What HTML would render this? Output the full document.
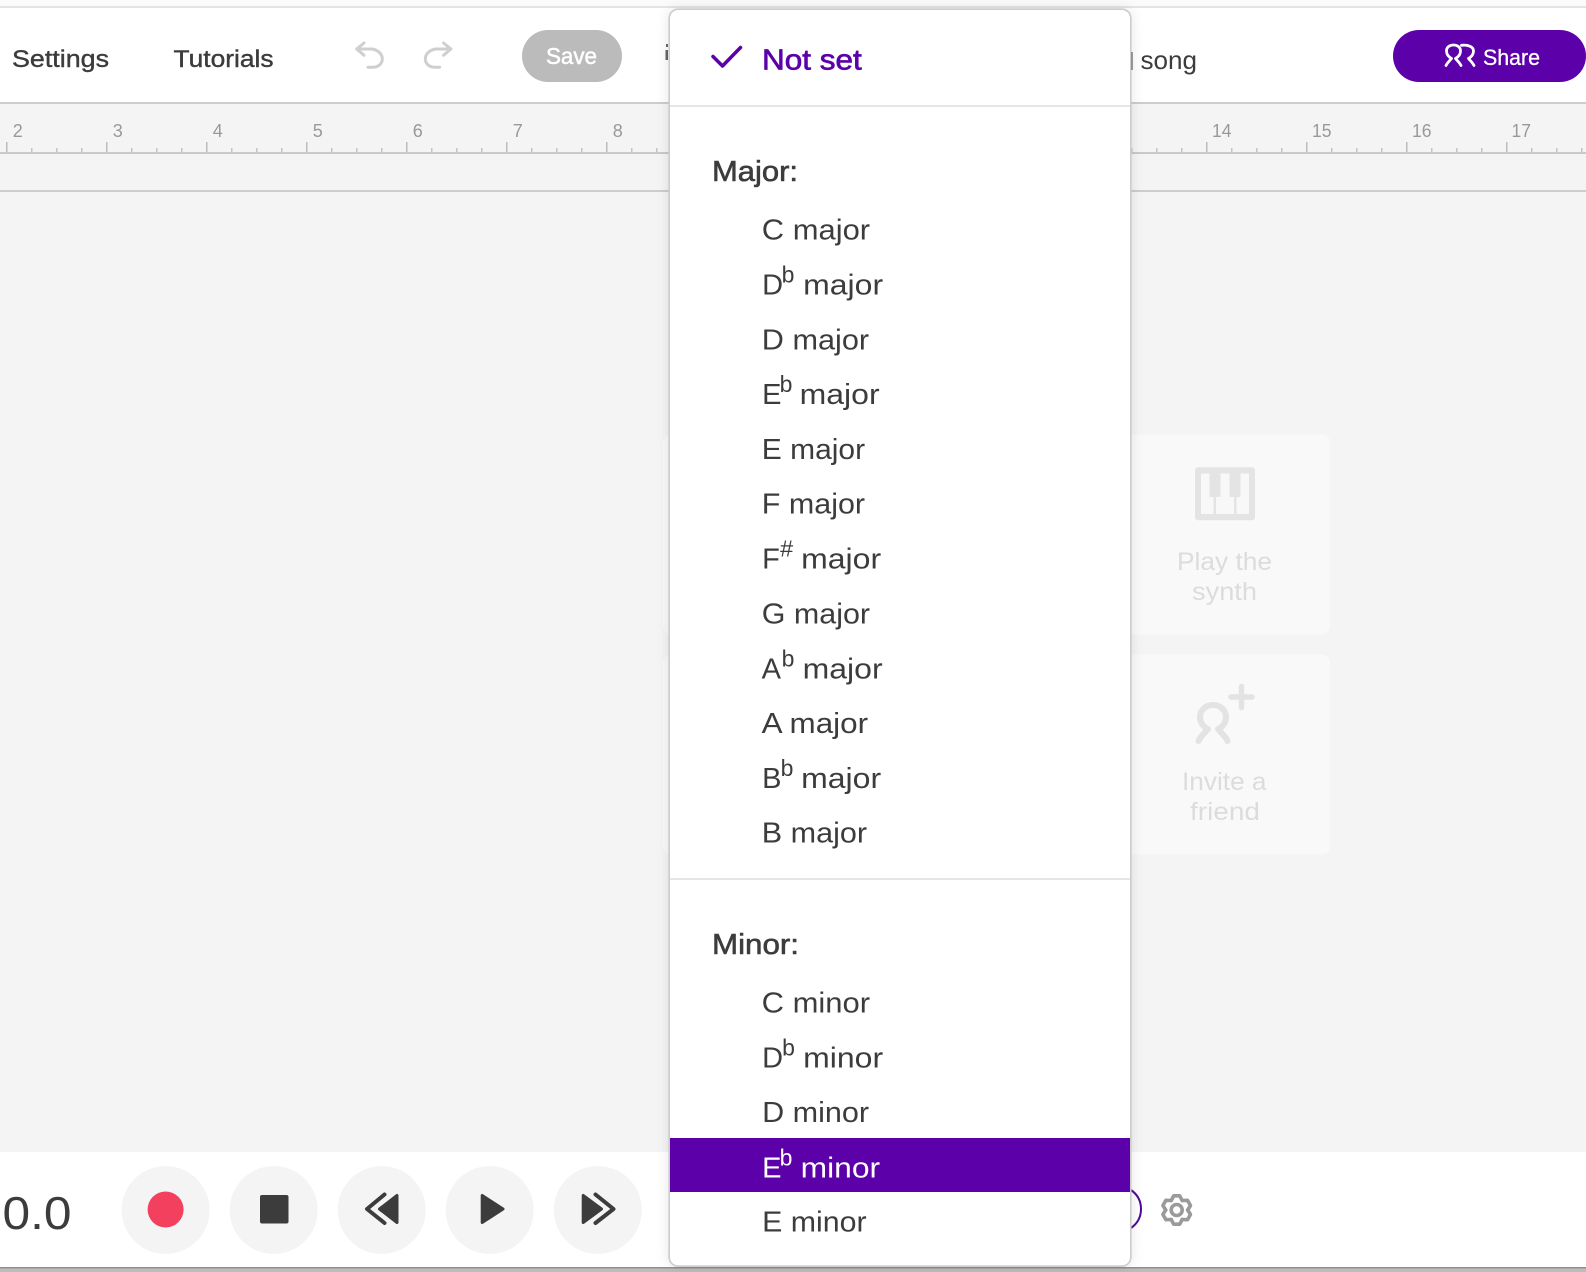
<!DOCTYPE html>
<html lang="en">
<head>
<meta charset="utf-8">
<title>Key selector</title>
<style>
html,body{margin:0;padding:0;width:1586px;height:1272px;overflow:hidden;background:#f4f4f4}
svg{display:block;position:absolute;left:0;top:0}
text{font-family:"Liberation Sans",sans-serif;fill:#3c3c3c}
.r{font-size:29px}
.s{font-size:23px}
.m{stroke:#3c3c3c;stroke-width:.6px}
.n{font-size:18px;fill:#999}
.c{font-size:25px;fill:#dcdcdc}
</style>
</head>
<body>
<svg width="1586" height="1272" viewBox="0 0 1586 1272" xmlns="http://www.w3.org/2000/svg">
<defs>
<pattern id="ticks" x="6" y="140" width="100" height="14" patternUnits="userSpaceOnUse">
<rect x="0" y="2" width="1.5" height="12" fill="#bdbdbd"/>
<rect x="25" y="8" width="1.5" height="6" fill="#c4c4c4"/>
<rect x="50" y="8" width="1.5" height="6" fill="#c4c4c4"/>
<rect x="75" y="8" width="1.5" height="6" fill="#c4c4c4"/>
</pattern>
</defs>

<!-- top strip and header -->
<rect x="0" y="0" width="1586" height="6" fill="#fbfbfb"/>
<rect x="0" y="6" width="1586" height="2" fill="#e4e4e4"/>
<rect x="0" y="8" width="1586" height="95" fill="#fff"/>
<rect x="0" y="102" width="1586" height="2" fill="#cdcdcd"/>

<text x="12" y="67" font-size="24" textLength="97" lengthAdjust="spacingAndGlyphs" stroke="#3c3c3c" stroke-width=".4">Settings</text>
<text x="173.5" y="67" font-size="24" textLength="100" lengthAdjust="spacingAndGlyphs" stroke="#3c3c3c" stroke-width=".4">Tutorials</text>

<g fill="none" stroke="#cfcfcf" stroke-width="3" stroke-linecap="round" stroke-linejoin="round">
<path d="M364 43L356.7 49L364 55.3M356.7 49H372C378 50 382.3 54 382.3 59C382.3 64 378 67.3 372 67.3H368"/>
<path d="M443.6 43L450.9 49L443.6 55.3M450.9 49H435.6C429.6 50 425.3 54 425.3 59C425.3 64 429.6 67.3 435.6 67.3H439.6"/>
</g>

<rect x="522" y="30" width="100" height="52" rx="26" fill="#bbb"/>
<text x="546" y="64" font-size="23" textLength="51" lengthAdjust="spacingAndGlyphs" style="fill:#fff" stroke="#fff" stroke-width=".5">Save</text>

<rect x="666" y="44" width="2" height="3" fill="#666"/>
<rect x="665.5" y="50" width="2.5" height="10" fill="#666"/>

<rect x="1130.5" y="52" width="2" height="18" fill="#3c3c3c"/>
<text x="1140.5" y="69" font-size="26" textLength="56.5" lengthAdjust="spacingAndGlyphs">song</text>

<rect x="1393" y="30" width="193" height="52" rx="26" fill="#5c00a9"/>
<g fill="none" stroke="#fff" stroke-width="2.8" stroke-linecap="round" stroke-linejoin="round">
<path d="M1446 65.5C1447.5 62.5 1450 60.5 1451.5 58.5C1448 56.5 1446.5 53.5 1446.5 51C1446.5 47 1449.8 45 1453.5 45C1457.2 45 1460.5 47 1460.5 51C1460.5 53.5 1459 56.5 1455.5 58.5C1457 60.5 1459.5 62.5 1461 65.5"/>
<path d="M1461.5 45.3C1467.5 44.5 1473.5 46.5 1473.5 51C1473.5 53.5 1472 56.5 1468.5 58.5C1470 60.5 1472.5 62.5 1474 65.5"/>
</g>
<text x="1483" y="65" font-size="22" textLength="57" lengthAdjust="spacingAndGlyphs" style="fill:#fff" stroke="#fff" stroke-width=".3">Share</text>

<!-- ruler -->
<rect x="0" y="140" width="1586" height="14" fill="url(#ticks)"/>
<rect x="0" y="152" width="1586" height="2" fill="#c9c9c9"/>
<rect x="0" y="190" width="1586" height="2" fill="#cdcdcd"/>
<text class="n" x="12.7" y="137">2</text>
<text class="n" x="112.7" y="137">3</text>
<text class="n" x="212.7" y="137">4</text>
<text class="n" x="312.7" y="137">5</text>
<text class="n" x="412.7" y="137">6</text>
<text class="n" x="512.7" y="137">7</text>
<text class="n" x="612.7" y="137">8</text>
<text class="n" x="1212" y="137" textLength="19.5" lengthAdjust="spacingAndGlyphs">14</text>
<text class="n" x="1312" y="137" textLength="19.5" lengthAdjust="spacingAndGlyphs">15</text>
<text class="n" x="1412" y="137" textLength="19.5" lengthAdjust="spacingAndGlyphs">16</text>
<text class="n" x="1511.5" y="137" textLength="19.5" lengthAdjust="spacingAndGlyphs">17</text>

<!-- empty-state cards -->
<rect x="663" y="434.5" width="60" height="200" rx="8" fill="#f9f9f9"/>
<rect x="663" y="654.5" width="60" height="200" rx="8" fill="#f9f9f9"/>
<rect x="1110" y="434.5" width="220" height="200" rx="8" fill="#f9f9f9"/>
<rect x="1110" y="654.5" width="220" height="200" rx="8" fill="#f9f9f9"/>

<rect x="1195" y="467.3" width="60" height="53" rx="3" fill="#e4e4e4"/>
<g fill="#f8f8f8">
<path d="M1201 473.5H1209.5V497H1213.5V514H1201Z"/>
<path d="M1220.5 473.5H1229.5V497H1234V514H1216V497H1220.5Z"/>
<path d="M1240.5 473.5H1249V514H1236.5V497H1240.5Z"/>
</g>
<text class="c" x="1177" y="570" textLength="95" lengthAdjust="spacingAndGlyphs">Play the</text>
<text class="c" x="1192" y="600" textLength="65" lengthAdjust="spacingAndGlyphs">synth</text>

<g fill="none" stroke="#e3e3e3" stroke-width="6" stroke-linecap="round" stroke-linejoin="round">
<path d="M1198.5 741C1200.5 736 1205 733 1208 729C1203 727 1200 722 1200 717C1200 710 1206 705 1213 705C1220 705 1226 710 1226 717C1226 722 1223 727 1218 729C1221 733 1225.5 736 1227.5 741"/>
<path stroke-width="5.5" d="M1231 697H1252M1241.5 686.5V707.5"/>
</g>
<text class="c" x="1182" y="790" textLength="84.5" lengthAdjust="spacingAndGlyphs">Invite a</text>
<text class="c" x="1190" y="820" textLength="70" lengthAdjust="spacingAndGlyphs">friend</text>

<!-- transport bar -->
<rect x="0" y="1152" width="1586" height="115" fill="#fff"/>
<rect x="0" y="1267" width="1586" height="1.5" fill="#8f8f8f"/>
<rect x="0" y="1268.5" width="1586" height="3.5" fill="#bdbdbd"/>

<text x="2.5" y="1229" font-size="46" textLength="69" lengthAdjust="spacingAndGlyphs">0.0</text>

<g fill="#f4f4f4">
<circle cx="165.6" cy="1210" r="44"/>
<circle cx="273.7" cy="1210" r="44"/>
<circle cx="381.7" cy="1210" r="44"/>
<circle cx="489.7" cy="1210" r="44"/>
<circle cx="597.8" cy="1210" r="44"/>
</g>
<circle cx="165.6" cy="1209.5" r="18" fill="#f4405f"/>
<rect x="260" y="1195" width="28.5" height="28.5" rx="2" fill="#3c3c3c"/>
<g fill="#3c3c3c" stroke="#3c3c3c" stroke-width="3" stroke-linejoin="round">
<path d="M397 1195.5V1222.5L379.5 1209Z"/>
<path d="M482.2 1195.5V1222.5L503 1209Z"/>
<path d="M583.2 1195.5V1222.5L601.5 1209Z"/>
</g>
<g fill="none" stroke="#3c3c3c" stroke-width="4" stroke-linecap="round" stroke-linejoin="round">
<path d="M384.5 1194.5L367 1209L384.5 1223"/>
<path d="M595.5 1194.5L613.5 1209L595.5 1223"/>
</g>

<path d="M1131 1190Q1141 1197 1141 1209Q1141 1221 1131 1228" fill="none" stroke="#4b0b99" stroke-width="2"/>
<g transform="translate(1176.7 1210)" fill="none" stroke="#9a9a9a" stroke-width="3.6" stroke-linecap="round" stroke-linejoin="round">
<path d="M-5.5 -9.5L-3 -14.2H3L5.5 -9.5"/>
<path transform="rotate(60)" d="M-5.5 -9.5L-3 -14.2H3L5.5 -9.5"/>
<path transform="rotate(120)" d="M-5.5 -9.5L-3 -14.2H3L5.5 -9.5"/>
<path transform="rotate(180)" d="M-5.5 -9.5L-3 -14.2H3L5.5 -9.5"/>
<path transform="rotate(240)" d="M-5.5 -9.5L-3 -14.2H3L5.5 -9.5"/>
<path transform="rotate(300)" d="M-5.5 -9.5L-3 -14.2H3L5.5 -9.5"/>
<circle r="5.5"/>
</g>

<!-- dropdown -->
<rect x="669.2" y="9.2" width="461.6" height="1257" rx="9" fill="#fff" stroke="#cccccc" stroke-width="1.6" style="filter:drop-shadow(0 0 6px rgba(0,0,0,.10))"/>

<path d="M713 56.5L722.5 66L740.5 47.5" fill="none" stroke="#5c00a9" stroke-width="3.5" stroke-linecap="round" stroke-linejoin="round"/>
<text x="762" y="69.3" font-size="29" textLength="99.7" lengthAdjust="spacingAndGlyphs" style="fill:#5c00a9" stroke="#5c00a9" stroke-width=".7">Not set</text>
<rect x="670" y="105" width="460" height="2" fill="#e6e6e6"/>

<text class="r m" x="712" y="181" textLength="86" lengthAdjust="spacingAndGlyphs">Major:</text>

<g transform="translate(-0.9 -0.3)">
<text class="r" x="762.7" y="240" textLength="108.3" lengthAdjust="spacingAndGlyphs">C major</text>

<text class="r" x="763" y="294.8">D</text><text class="s" x="782.5" y="283">b</text><text class="r" x="804" y="294.8" textLength="80" lengthAdjust="spacingAndGlyphs">major</text>

<text class="r" x="762.7" y="349.6" textLength="107.3" lengthAdjust="spacingAndGlyphs">D major</text>

<text class="r" x="763" y="404.5">E</text><text class="s" x="780.5" y="392.5">b</text><text class="r" x="800.5" y="404.5" textLength="80" lengthAdjust="spacingAndGlyphs">major</text>

<text class="r" x="762.7" y="459.3" textLength="103.3" lengthAdjust="spacingAndGlyphs">E major</text>

<text class="r" x="762.7" y="514" textLength="103.3" lengthAdjust="spacingAndGlyphs">F major</text>

<text class="r" x="763" y="569">F</text><text class="s" x="781" y="557" textLength="13" lengthAdjust="spacingAndGlyphs">#</text><text class="r" x="802" y="569" textLength="80" lengthAdjust="spacingAndGlyphs">major</text>

<text class="r" x="762.7" y="623.8" textLength="108.3" lengthAdjust="spacingAndGlyphs">G major</text>

<text class="r" x="762.5" y="678.6">A</text><text class="s" x="782.5" y="666.6">b</text><text class="r" x="803.5" y="678.6" textLength="80" lengthAdjust="spacingAndGlyphs">major</text>

<text class="r" x="762.5" y="733.4" textLength="106.5" lengthAdjust="spacingAndGlyphs">A major</text>

<text class="r" x="763" y="788.3">B</text><text class="s" x="781.5" y="776.3">b</text><text class="r" x="802" y="788.3" textLength="80" lengthAdjust="spacingAndGlyphs">major</text>

<text class="r" x="762.7" y="843" textLength="105.3" lengthAdjust="spacingAndGlyphs">B major</text>
</g>

<rect x="670" y="878" width="460" height="2" fill="#e6e6e6"/>

<text class="r m" x="712" y="954" textLength="87" lengthAdjust="spacingAndGlyphs">Minor:</text>

<g transform="translate(-0.9 -0.3)">
<text class="r" x="762.5" y="1012.7" textLength="108.5" lengthAdjust="spacingAndGlyphs">C minor</text>

<text class="r" x="763" y="1067.7">D</text><text class="s" x="783" y="1055.7">b</text><text class="r" x="804" y="1067.7" textLength="80" lengthAdjust="spacingAndGlyphs">minor</text>

<text class="r" x="763" y="1122.5" textLength="107" lengthAdjust="spacingAndGlyphs">D minor</text>
</g>

<rect x="670" y="1138" width="460" height="54" fill="#5c00a9"/>
<g transform="translate(-0.9 -0.3)">
<text class="r" x="763" y="1177.7" style="fill:#fff">E</text><text class="s" x="780.5" y="1165.7" style="fill:#fff">b</text><text class="r" x="801.5" y="1177.7" textLength="79.5" lengthAdjust="spacingAndGlyphs" style="fill:#fff">minor</text>

<text class="r" x="763" y="1231.7" textLength="104.5" lengthAdjust="spacingAndGlyphs">E minor</text>
</g>
</svg>
</body>
</html>
